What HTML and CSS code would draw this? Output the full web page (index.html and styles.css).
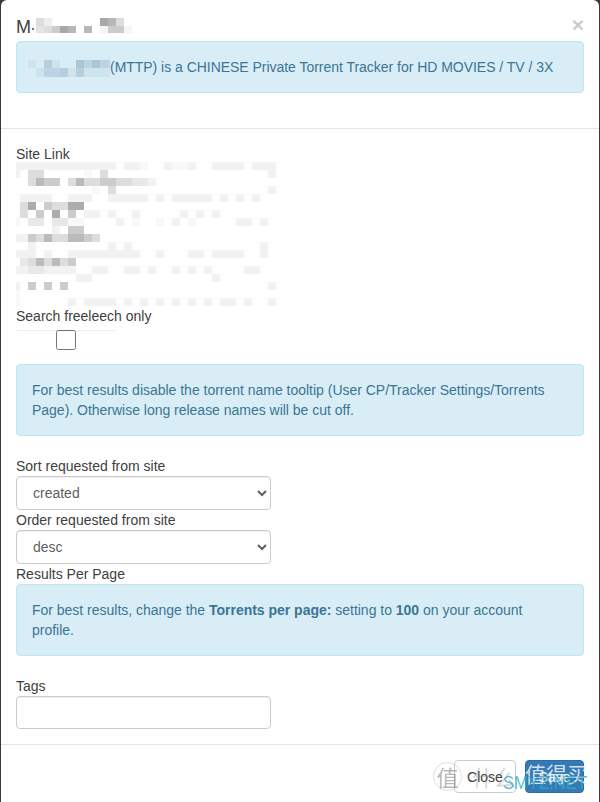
FILE: index.html
```html
<!DOCTYPE html>
<html lang="en">
<head>
<meta charset="utf-8">
<title>Indexer settings</title>
<link rel="stylesheet" href="styles.css">
</head>
<body>
<div class="modal">
  <header class="modal-header">
    <button class="close" type="button">×</button>
    <h4 class="modal-title">M<svg class="mosaic title-mosaic" viewBox="0 0 100 15" width="100" height="15">
      <path fill="#777777" d="M0 10h2v2h-2z"/>
      <path fill="#dddddd" d="M4 0h8v8h-8zM84 0h8v8h-8zM12 8h8v7h-8z"/>
      <path fill="#eeeeee" d="M12 0h8v8h-8z"/>
      <path fill="#a8a8a8" d="M68 0h8v8h-8zM28 8h8v7h-8z"/>
      <path fill="#b8b8b8" d="M76 0h8v8h-8zM36 8h8v7h-8zM52 8h8v7h-8z"/>
      <path fill="#e4e4e4" d="M4 8h8v7h-8z"/>
      <path fill="#cccccc" d="M20 8h8v7h-8zM76 8h16v7h-16z"/>
      <path fill="#f5f5f5" d="M68 8h8v7h-8zM92 8h8v7h-8z"/>
    </svg></h4>
    <div class="alert alert-intro"><svg class="mosaic intro-mosaic" viewBox="0 0 82 17" width="82" height="17">
      <path fill="#cfe3ed" d="M0 0h8v8h-8zM24 0h8v8h-8zM8 8h8v9h-8zM40 8h8v9h-8zM56 8h26v9h-26z"/>
      <path fill="#dbebf3" d="M8 0h8v8h-8z"/>
      <path fill="#b4d0de" d="M16 0h8v8h-8zM32 8h8v9h-8zM48 8h8v9h-8z"/>
      <path fill="#a8c8d8" d="M48 0h8v8h-8zM64 0h8v8h-8z"/>
      <path fill="#bcd4e2" d="M56 0h8v8h-8zM72 0h10v8h-10zM16 8h16v9h-16z"/>
    </svg>(MTTP) is a CHINESE Private Torrent Tracker for HD MOVIES / TV / 3X</div>
  </header>

  <section class="modal-body">
    <label class="field-label">Site Link</label>
    <svg class="mosaic site-mosaic" viewBox="48 66 780 432" width="260" height="144">
      <path fill="#f8f8f8" d="M252 90h24v24h-24zM276 138h24v24h-24zM204 234h48v24h-48zM396 234h24v24h-24zM468 234h24v24h-24zM564 234h24v24h-24zM420 66h24v24h-24zM516 66h48v24h-48zM48 234h12v24h-12zM48 450h12v48h-12z"/>
      <path fill="#f2f2f2" d="M48 66h300v24h-300zM372 66h48v24h-48zM492 66h24v24h-24zM564 66h24v24h-24zM636 66h96v24h-96zM756 66h72v24h-72zM48 90h12v24h-12zM804 90h24v24h-24zM804 138h24v24h-24zM444 114h24v24h-24zM60 162h96v24h-96zM204 162h72v24h-72zM324 162h120v24h-120zM468 162h24v24h-24zM516 162h120v24h-120zM660 162h24v24h-24zM708 162h24v24h-24zM756 162h24v24h-24zM252 210h48v24h-48zM324 210h24v24h-24zM396 210h24v24h-24zM540 210h24v24h-24zM588 210h24v24h-24zM636 210h24v24h-24zM348 234h24v24h-24zM516 234h24v24h-24zM708 234h48v24h-48zM780 234h24v24h-24zM156 258h24v24h-24zM48 282h36v24h-36zM84 306h24v24h-24zM324 306h24v24h-24zM372 306h24v24h-24zM780 306h24v48h-24zM48 330h60v24h-60zM132 330h24v24h-24zM204 330h216v24h-216zM468 330h24v24h-24zM564 330h48v24h-48zM636 330h96v24h-96zM48 378h36v24h-36zM132 378h96v24h-96zM276 378h48v24h-48zM372 378h48v24h-48zM444 378h24v24h-24zM516 378h24v24h-24zM564 378h24v24h-24zM612 378h24v24h-24zM732 378h48v24h-48zM228 402h48v24h-48zM636 402h24v24h-24zM48 426h12v24h-12zM804 426h24v24h-24zM204 474h24v24h-24zM252 474h96v24h-96zM372 474h24v24h-24zM420 474h24v24h-24zM468 474h24v24h-24zM516 474h24v24h-24zM564 474h24v24h-24zM612 474h24v24h-24zM660 474h48v24h-48zM732 474h24v24h-24zM804 474h24v24h-24z"/>
      <path fill="#e8e8e8" d="M84 234h48v24h-48zM156 234h48v24h-48zM396 114h48v24h-48zM60 354h24v24h-24zM84 378h48v24h-48z"/>
      <path fill="#dddddd" d="M84 90h48v24h-48zM300 90h24v24h-24zM84 114h24v24h-24zM204 114h24v24h-24zM252 114h48v24h-48zM348 114h48v24h-48zM324 138h24v24h-24zM60 186h24v24h-24zM156 186h48v24h-48zM60 210h24v24h-24zM108 282h24v24h-24zM156 282h48v24h-48zM276 282h24v24h-24zM84 354h24v24h-24zM132 354h24v24h-24zM180 354h24v24h-24z"/>
      <path fill="#cccccc" d="M132 114h48v24h-48zM300 114h48v24h-48zM132 186h24v24h-24zM108 210h24v24h-24zM204 210h24v24h-24zM204 258h48v24h-48zM84 282h24v24h-24zM252 282h24v24h-24zM204 354h24v24h-24zM84 426h24v24h-24zM132 426h24v24h-24zM180 426h24v24h-24z"/>
      <path fill="#bbbbbb" d="M108 114h24v24h-24zM228 114h24v24h-24zM132 282h24v24h-24zM204 282h48v24h-48zM108 354h24v24h-24zM156 354h24v24h-24z"/>
      <path fill="#adadad" d="M84 186h24v24h-24zM204 186h48v24h-48zM156 210h24v24h-24z"/>
    </svg>
    <label class="field-label label-check">Search freeleech only</label>
    <input class="check-control" type="checkbox">
    <div class="alert alert-check">For best results disable the torrent name tooltip (User CP/Tracker Settings/Torrents Page). Otherwise long release names will be cut off.</div>

    <label class="field-label">Sort requested from site</label>
    <select class="form-control"><option>created</option></select>
    <label class="field-label">Order requested from site</label>
    <select class="form-control"><option>desc</option></select>
    <label class="field-label">Results Per Page</label>
    <div class="alert">For best results, change the <b>Torrents per page:</b> setting to <b>100</b> on your account profile.</div>
    <label class="field-label">Tags</label>
    <input class="form-control input-tags" type="text">
  </section>

  <footer class="modal-footer">
    <button class="btn btn-default" type="button">Close</button>
    <button class="btn btn-primary" type="button">Save</button>
  </footer>
</div>

<div class="watermark">
  <span class="wm-seal">值</span>
  <span class="wm-faint">什么</span>
  <span class="wm-strong">值得买</span>
  <span class="wm-site">SMYZ.NET</span>
</div>
</body>
</html>
```

FILE: styles.css
```css
* {
  box-sizing: border-box;
}

html,
body {
  height: 802px;
  margin: 0;
  overflow: hidden;
}

body {
  position: relative;
  background: #3a3a3a;
  color: #404040;
  font: 14px/20px "Liberation Sans", Arial, "Noto Sans CJK SC", sans-serif;
}

.modal {
  width: 598px;
  margin: 0 1px;
  background: #fff;
  border-radius: 6px 6px 0 0;
}

.modal-header {
  padding: 15px 15px 0;
  border-bottom: 1px solid #e5e5e5;
}

.modal-title {
  height: 26px;
  margin: 0;
  color: #404040;
  font-size: 18px;
  font-weight: 400;
  line-height: 24px;
  white-space: nowrap;
}

.mosaic {
  display: block;
  shape-rendering: crispEdges;
}

.title-mosaic {
  display: inline-block;
  margin-left: 1px;
  vertical-align: 0;
}

.intro-mosaic {
  display: inline-block;
  margin-left: -4px;
  vertical-align: -5px;
}

.close {
  float: right;
  margin-top: -1px;
  padding: 0;
  border: 0;
  background: transparent;
  color: #000;
  font: 700 21px/21px "Liberation Sans", Arial, sans-serif;
  opacity: 0.2;
}

.alert {
  margin-bottom: 20px;
  padding: 15px;
  border: 1px solid #bce8f1;
  border-radius: 4px;
  background: #d9edf7;
  color: #3a7694;
  letter-spacing: -0.015px;
}

.alert-intro {
  margin-bottom: 35px;
  letter-spacing: -0.03px;
  white-space: nowrap;
}

.modal-body {
  padding: 15px;
}

.field-label {
  display: block;
  height: 20px;
}

.site-mosaic {
  margin-top: -2px;
}

.label-check {
  margin-bottom: 4px;
}

.check-control {
  display: block;
  width: 100px;
  height: 20px;
  margin: 0;
  box-shadow: inset 0 1px 1px rgba(0, 0, 0, 0.075);
}

.alert-check {
  margin-top: 14px;
}

.form-control {
  display: block;
  width: 255px;
  height: 34px;
  padding: 6px 12px;
  border: 1px solid #ccc;
  border-radius: 4px;
  background: #fff;
  color: #5f5f5f;
  font: inherit;
  box-shadow: inset 0 1px 1px rgba(0, 0, 0, 0.075);
}

.input-tags {
  height: 33px;
}

.modal-footer {
  display: flex;
  justify-content: flex-end;
  gap: 9px;
  padding: 15px;
  border-top: 1px solid #e5e5e5;
}

.btn {
  height: 33px;
  padding: 6px 12px;
  border: 1px solid transparent;
  border-radius: 4px;
  font: inherit;
}

.btn-default {
  width: 62px;
  border-color: #ccc;
  background: #fff;
  color: #404040;
}

.btn-primary {
  width: 59px;
  border-color: #2e6da4;
  background: #337ab7;
  color: #fff;
}

.watermark {
  position: absolute;
  left: 432px;
  top: 756px;
  width: 168px;
  height: 46px;
  pointer-events: none;
}

.wm-seal,
.wm-faint,
.wm-strong,
.wm-site {
  position: absolute;
  font-family: "Noto Sans CJK SC", sans-serif;
  white-space: nowrap;
}

.wm-seal {
  left: 1px;
  top: 6px;
  width: 29px;
  height: 29px;
  border: 1px solid rgba(150, 150, 150, 0.3);
  border-radius: 50%;
  color: rgba(120, 120, 120, 0.55);
  font-size: 22px;
  line-height: 26px;
  text-align: center;
}

.wm-faint {
  left: 40px;
  top: 4px;
  color: rgba(130, 130, 130, 0.32);
  font-size: 22px;
  line-height: 32px;
}

.wm-strong {
  left: 93px;
  top: 1px;
  color: rgba(235, 240, 245, 0.88);
  font-size: 21px;
  line-height: 32px;
}

.wm-site {
  left: 71px;
  top: 16px;
  color: rgba(50, 170, 190, 0.8);
  font: 400 19px/22px "Liberation Sans", Arial, sans-serif;
  transform: scaleX(0.875);
  transform-origin: left center;
}
```
